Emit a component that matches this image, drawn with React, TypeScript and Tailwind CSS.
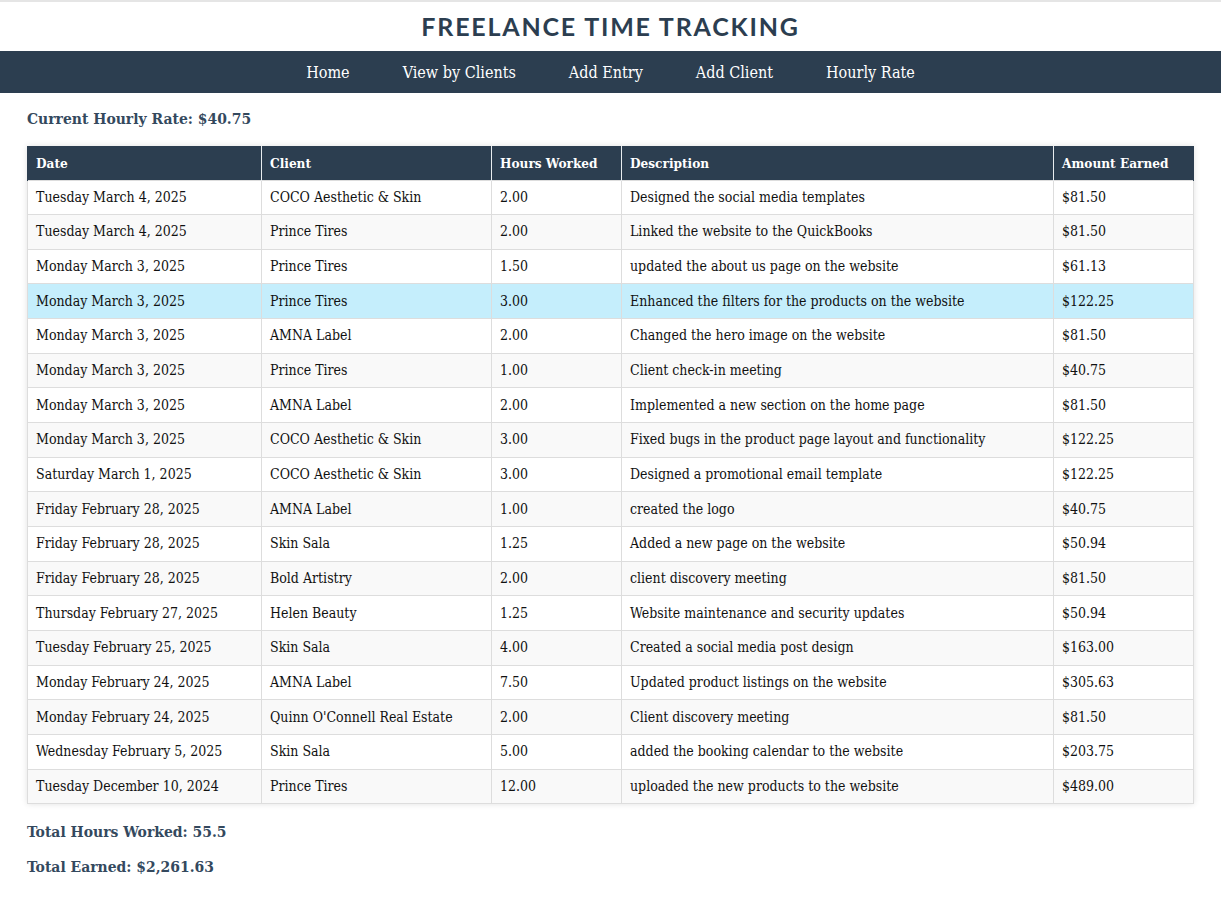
const ENTRIES = [
  ["Tuesday March 4, 2025", "COCO Aesthetic & Skin", "2.00", "Designed the social media templates", "$81.50"],
  ["Tuesday March 4, 2025", "Prince Tires", "2.00", "Linked the website to the QuickBooks", "$81.50"],
  ["Monday March 3, 2025", "Prince Tires", "1.50", "updated the about us page on the website", "$61.13"],
  ["Monday March 3, 2025", "Prince Tires", "3.00", "Enhanced the filters for the products on the website", "$122.25"],
  ["Monday March 3, 2025", "AMNA Label", "2.00", "Changed the hero image on the website", "$81.50"],
  ["Monday March 3, 2025", "Prince Tires", "1.00", "Client check-in meeting", "$40.75"],
  ["Monday March 3, 2025", "AMNA Label", "2.00", "Implemented a new section on the home page", "$81.50"],
  ["Monday March 3, 2025", "COCO Aesthetic & Skin", "3.00", "Fixed bugs in the product page layout and functionality", "$122.25"],
  ["Saturday March 1, 2025", "COCO Aesthetic & Skin", "3.00", "Designed a promotional email template", "$122.25"],
  ["Friday February 28, 2025", "AMNA Label", "1.00", "created the logo", "$40.75"],
  ["Friday February 28, 2025", "Skin Sala", "1.25", "Added a new page on the website", "$50.94"],
  ["Friday February 28, 2025", "Bold Artistry", "2.00", "client discovery meeting", "$81.50"],
  ["Thursday February 27, 2025", "Helen Beauty", "1.25", "Website maintenance and security updates", "$50.94"],
  ["Tuesday February 25, 2025", "Skin Sala", "4.00", "Created a social media post design", "$163.00"],
  ["Monday February 24, 2025", "AMNA Label", "7.50", "Updated product listings on the website", "$305.63"],
  ["Monday February 24, 2025", "Quinn O'Connell Real Estate", "2.00", "Client discovery meeting", "$81.50"],
  ["Wednesday February 5, 2025", "Skin Sala", "5.00", "added the booking calendar to the website", "$203.75"],
  ["Tuesday December 10, 2024", "Prince Tires", "12.00", "uploaded the new products to the website", "$489.00"],
];

const NAV = ["Home", "View by Clients", "Add Entry", "Add Client", "Hourly Rate"];

const serif = { fontFamily: '"DejaVu Serif Condensed", "DejaVu Serif", serif' };

export default function App() {
  return (
    <div className="min-h-[904px] bg-white text-[#2c3e50] border-t-2 border-[#e5e5e5]" style={serif}>
      <header className="h-[49px] flex items-center justify-center">
        <h1
          className="text-[25px] font-bold uppercase tracking-[1.8px] text-[#2c3e50] leading-none"
          style={{ fontFamily: '"Lato", "Open Sans", sans-serif' }}
        >
          Freelance Time Tracking
        </h1>
      </header>

      <nav className="h-[42px] bg-[#2c3e50] flex items-center justify-center gap-[53px] pt-[2px]">
        {NAV.map((n) => (
          <a key={n} href="#" className="text-white text-[16px]">
            {n}
          </a>
        ))}
      </nav>

      <main className="px-[27px]">
        <p className="mt-[15px] mb-[16px] text-[15.5px] leading-[22px] font-bold text-[#34495e]">Current Hourly Rate: $40.75</p>

        <table className="w-[1166px] border-collapse text-[14px] text-[#111] shadow-[0_0_6px_rgba(0,0,0,0.12)] table-fixed">
          <colgroup>
            <col className="w-[234px]" />
            <col className="w-[230px]" />
            <col className="w-[130px]" />
            <col className="w-[432px]" />
            <col className="w-[140px]" />
          </colgroup>
          <thead>
            <tr className="bg-[#2c3e50] text-white h-[34px]">
              {["Date", "Client", "Hours Worked", "Description", "Amount Earned"].map((h) => (
                <th
                  key={h}
                  className="text-left font-bold text-[13.5px] px-[8px] border-x border-[#e8ecef] first:border-l-[#2c3e50] last:border-r-[#2c3e50]"
                >
                  {h}
                </th>
              ))}
            </tr>
          </thead>
          <tbody>
            {ENTRIES.map((r, i) => (
              <tr
                key={i}
                className={`h-[34.67px] ${i === 3 ? "bg-[#c5eefc]" : i % 2 === 1 ? "bg-[#f9f9f9]" : "bg-white"}`}
              >
                {r.map((c, j) => (
                  <td key={j} className="px-[8px] border border-[#dddddd] whitespace-nowrap">
                    {c}
                  </td>
                ))}
              </tr>
            ))}
          </tbody>
        </table>

        <p className="mt-[17px] text-[15.5px] leading-[22px] font-bold text-[#34495e]">Total Hours Worked: 55.5</p>
        <p className="mt-[13px] text-[15.5px] leading-[22px] font-bold text-[#34495e]">Total Earned: $2,261.63</p>
      </main>
    </div>
  );
}
